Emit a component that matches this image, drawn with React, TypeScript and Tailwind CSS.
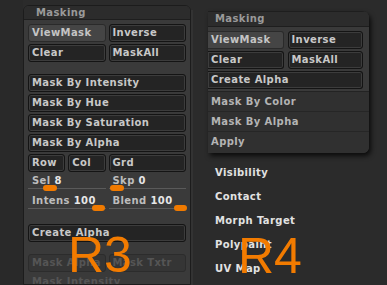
import React from "react";

const font = "font-['DejaVu_Sans',sans-serif] font-bold text-[10px] tracking-[0.4px]";

function Btn({ label, active, faded, className = "" }: { label: string; active?: boolean; faded?: boolean; className?: string }) {
  const base = active
    ? "bg-[#454545] border-[#2a2a2a] text-[#c4c4c4]"
    : faded
    ? "bg-[#353535] border-[#2c2c2c] text-[#555555]"
    : "bg-[#242424] border-[#141414] text-[#c8c8c8] shadow-[inset_0_0_0_1px_#3c3c3c]";
  return (
    <div className={`h-[18px] rounded-[3px] border flex items-center pl-[3px] leading-none whitespace-nowrap overflow-hidden ${base} ${className}`}>
      {label}
    </div>
  );
}

function Slider({ label, value, knobLeft, knobW = 14 }: { label: string; value: string; knobLeft: number; knobW?: number }) {
  return (
    <div className="flex flex-col">
      <div className="h-[12px] leading-[12px] pl-[4px] text-[#bdbdbd] whitespace-nowrap">
        {label} <span className="text-[#e6e6e6]">{value}</span>
      </div>
      <div className="relative h-[1px] mt-[1px] bg-[#5a5a5a]">
        <div className="absolute top-[-3px] h-[6px] rounded-[3px] bg-[#f07a00]" style={{ left: knobLeft, width: knobW }} />
      </div>
    </div>
  );
}

export default function App() {
  return (
    <div className={`relative w-[387px] h-[285px] overflow-hidden bg-[#2b2b2b] flex ${font}`}>
      <div className="w-[23px] shrink-0 bg-[#292929]" />
      {/* Left panel R3 */}
      <div className="w-[168px] shrink-0 mt-[5px] flex flex-col border border-[#1c1c1c] rounded-t-[6px] bg-[#3a3a3a] overflow-hidden">
        <div className="h-[14px] shrink-0 bg-[#2c2c2c] border-b border-[#1e1e1e] pl-[12px] leading-[14px] text-[#9a9a9a]">Masking</div>
        <div className="flex flex-col px-[4px] pt-[4px]">
          <div className="grid grid-cols-2 gap-[3px]">
            <Btn label="ViewMask" active />
            <Btn label="Inverse" />
          </div>
          <div className="grid grid-cols-2 gap-[3px] mt-[2px]">
            <Btn label="Clear" />
            <Btn label="MaskAll" />
          </div>
          <div className="flex flex-col gap-[2px] mt-[12px]">
            <Btn label="Mask By Intensity" />
            <Btn label="Mask By Hue" />
            <Btn label="Mask By Saturation" />
            <Btn label="Mask By Alpha" />
            <div className="grid grid-cols-4 gap-[3px]">
              <Btn label="Row" />
              <Btn label="Col" />
              <Btn label="Grd" className="col-span-2" />
            </div>
          </div>
          <div className="grid grid-cols-2 gap-[3px] pt-[3px]">
            <Slider label="Sel" value="8" knobLeft={15} />
            <Slider label="Skp" value="0" knobLeft={1} />
          </div>
          <div className="grid grid-cols-2 gap-[3px] pt-[6px]">
            <Slider label="Intens" value="100" knobLeft={64} knobW={13} />
            <Slider label="Blend" value="100" knobLeft={65} knobW={13} />
          </div>
          <div className="mt-[15px]">
            <Btn label="Create Alpha" />
          </div>
          <div className="grid grid-cols-2 gap-[3px] mt-[12px]">
            <Btn label="Mask Alpha" faded />
            <Btn label="Mask Txtr" faded />
          </div>
          <div className="h-[14px] leading-[14px] pl-[4px] text-[#555555] mt-[3px]">Mask Intensity</div>
        </div>
      </div>
      <div className="w-[2px] shrink-0 mt-[10px] bg-[#333333]" />
      {/* Right column R4 */}
      <div className="ml-[15px] w-[161px] shrink-0 flex flex-col">
        <div className="mt-[11px] flex flex-col rounded-tr-[7px] rounded-br-[6px] bg-[#3a3a3a] shadow-[2px_3px_5px_rgba(0,0,0,0.75)] overflow-hidden">
          <div className="h-[16px] bg-[#2c2c2c] border-t border-[#1e1e1e] border-b border-b-[#1e1e1e] pl-[7px] leading-[14px] text-[#9a9a9a]">Masking</div>
          <div className="flex flex-col pr-[6px] pt-[4px] pb-[2px] gap-[2px]">
            <div className="grid grid-cols-2 gap-[4px]">
              <Btn label="ViewMask" active className="rounded-l-none border-l-0" />
              <Btn label="Inverse" />
            </div>
            <div className="grid grid-cols-2 gap-[4px]">
              <Btn label="Clear" className="rounded-l-none border-l-0" />
              <Btn label="MaskAll" />
            </div>
            <Btn label="Create Alpha" className="rounded-l-none border-l-0" />
          </div>
          <div className="flex flex-col bg-[#303030] border-t border-[#232323] text-[#b4b4b4]">
            <div className="h-[20px] leading-[20px] pl-[3px] border-b border-[#262626]">Mask By Color</div>
            <div className="h-[20px] leading-[20px] pl-[3px] border-b border-[#262626]">Mask By Alpha</div>
            <div className="h-[21px] leading-[20px] pl-[3px]">Apply</div>
          </div>
        </div>
        <div className="mt-[8px] flex flex-col pl-[7px] text-[#e2e2e2]">
          <div className="h-[24px] leading-[24px]">Visibility</div>
          <div className="h-[24px] leading-[24px]">Contact</div>
          <div className="h-[24px] leading-[24px]">Morph Target</div>
          <div className="h-[24px] leading-[24px]">Polypaint</div>
          <div className="h-[24px] leading-[24px]">UV Map</div>
        </div>
      </div>
      <div className="absolute left-[68px] top-[230px] font-['Liberation_Sans',sans-serif] font-normal text-[50px] leading-[50px] tracking-normal text-[#f27b00]">R3</div>
      <div className="absolute left-[238px] top-[231px] font-['Liberation_Sans',sans-serif] font-normal text-[50px] leading-[50px] tracking-normal text-[#f27b00]">R4</div>
    </div>
  );
}
